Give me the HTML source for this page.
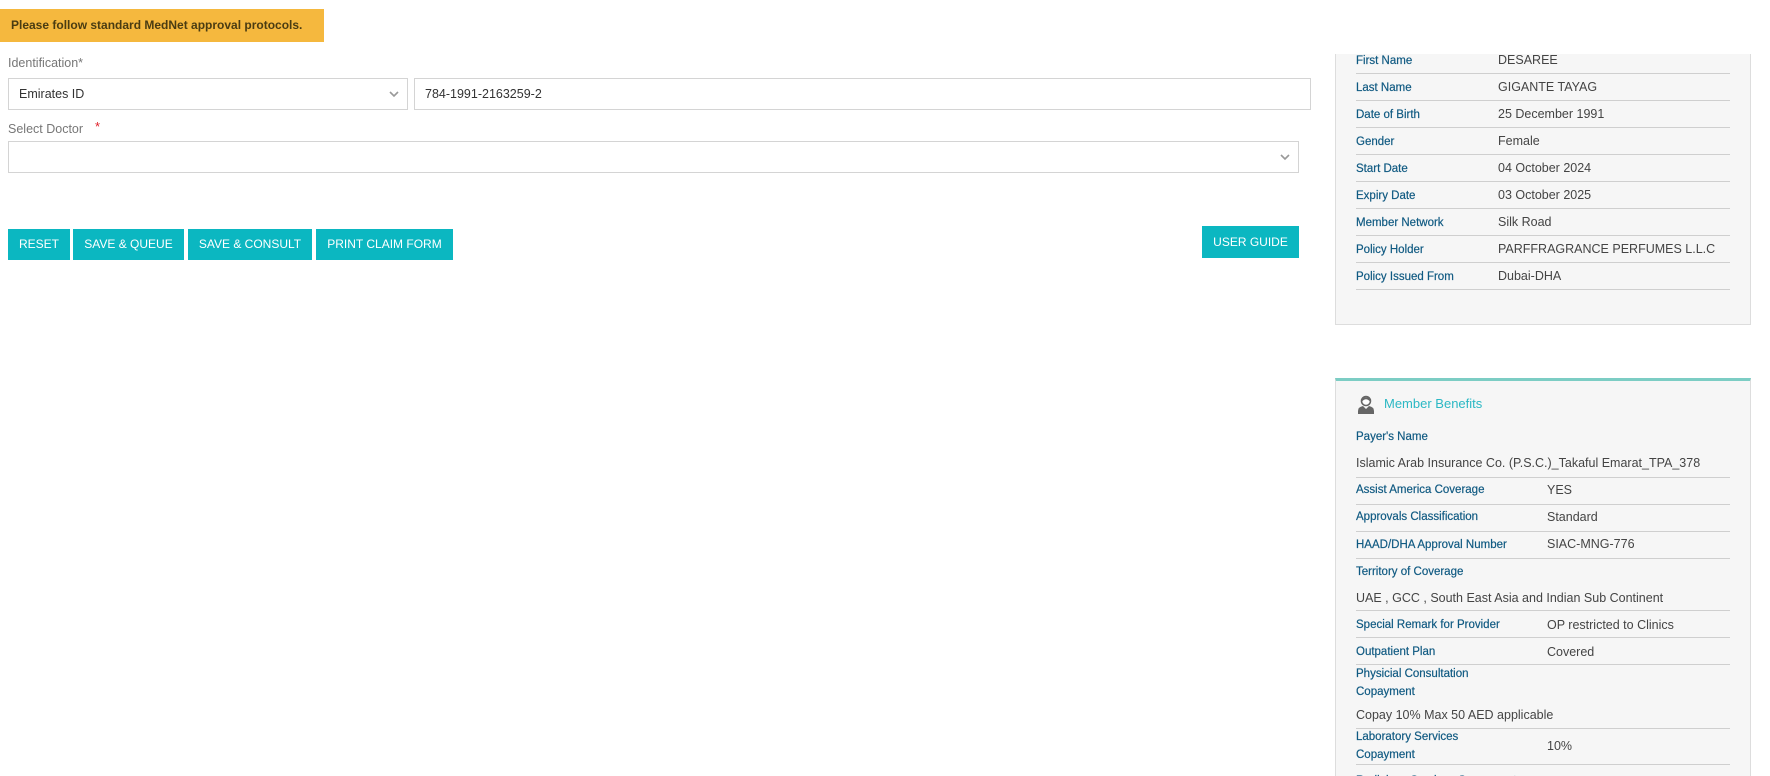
<!DOCTYPE html>
<html style="height:776px;overflow:hidden"><head><meta charset="utf-8"><style>
*{margin:0;padding:0;box-sizing:border-box}
body{width:1770px;height:776px;overflow:hidden;background:#fff;font-family:"Liberation Sans",Arial,sans-serif;position:relative}
.a{position:absolute}
.banner{left:0;top:9px;width:324px;height:33px;background:#f5b83e;color:#4a3c12;font-weight:bold;font-size:12px;line-height:33px;padding-left:11px}
.lbl{color:#777;font-size:12.5px}
.box{border:1px solid #d4d4d4;background:#fff;font-size:12.5px;color:#333;line-height:30px;padding-left:10px}
.chev{position:absolute;right:8px;top:11px}
.btn{background:#0bb7c1;color:#fff;font-size:12px;text-align:center;line-height:31px;height:31px;top:229px}
.panel{background:#f6f6f6;border:1px solid #ddd;left:1335px;width:416px}
.k{position:absolute;left:1356px;font-size:11.5px;color:#105a82;transform:translateY(-50%);white-space:nowrap;-webkit-text-stroke:0.2px #105a82}
.v{position:absolute;font-size:12.5px;color:#444;transform:translateY(-50%);white-space:nowrap}
.ln{position:absolute;left:1356px;width:374px;height:1px;background:#cfcfcf}
</style></head><body>
<div class="a banner">Please follow standard MedNet approval protocols.</div>
<div class="a lbl" style="left:8px;top:56px">Identification*</div>
<div class="a box" style="left:8px;top:78px;width:400px;height:32px">Emirates ID<svg class="chev" width="10" height="8" viewBox="0 0 10 8"><path d="M1 2l4 4 4-4" stroke="#999" stroke-width="1.6" fill="none"/></svg></div>
<div class="a box" style="left:414px;top:78px;width:897px;height:32px">784-1991-2163259-2</div>
<div class="a lbl" style="left:8px;top:122px">Select Doctor</div>
<div class="a" style="left:95px;top:119px;color:#e0202a;font-size:13px">*</div>
<div class="a box" style="left:8px;top:141px;width:1291px;height:32px"><svg class="chev" width="10" height="8" viewBox="0 0 10 8"><path d="M1 2l4 4 4-4" stroke="#999" stroke-width="1.6" fill="none"/></svg></div>
<div class="a btn" style="left:8px;width:62px">RESET</div>
<div class="a btn" style="left:73px;width:111px">SAVE &amp; QUEUE</div>
<div class="a btn" style="left:188px;width:124px">SAVE &amp; CONSULT</div>
<div class="a btn" style="left:316px;width:137px">PRINT CLAIM FORM</div>
<div class="a btn" style="left:1202px;width:97px;top:226px;height:32px;line-height:32px">USER GUIDE</div>

<div class="a panel" style="top:54px;height:271px;border-top:none"></div>
<div class="k" style="top:61px">First Name</div><div class="v" style="left:1498px;top:60px">DESAREE</div><div class="ln" style="top:73px"></div>
<div class="k" style="top:88px">Last Name</div><div class="v" style="left:1498px;top:87px">GIGANTE TAYAG</div><div class="ln" style="top:100px"></div>
<div class="k" style="top:115px">Date of Birth</div><div class="v" style="left:1498px;top:114px">25 December 1991</div><div class="ln" style="top:127px"></div>
<div class="k" style="top:142px">Gender</div><div class="v" style="left:1498px;top:141px">Female</div><div class="ln" style="top:154px"></div>
<div class="k" style="top:169px">Start Date</div><div class="v" style="left:1498px;top:168px">04 October 2024</div><div class="ln" style="top:181px"></div>
<div class="k" style="top:196px">Expiry Date</div><div class="v" style="left:1498px;top:195px">03 October 2025</div><div class="ln" style="top:208px"></div>
<div class="k" style="top:223px">Member Network</div><div class="v" style="left:1498px;top:222px">Silk Road</div><div class="ln" style="top:235px"></div>
<div class="k" style="top:250px">Policy Holder</div><div class="v" style="left:1498px;top:249px">PARFFRAGRANCE PERFUMES L.L.C</div><div class="ln" style="top:262px"></div>
<div class="k" style="top:277px">Policy Issued From</div><div class="v" style="left:1498px;top:276px">Dubai-DHA</div><div class="ln" style="top:289px"></div>

<div class="a panel" style="top:378px;height:398px;border-top:3px solid #7ccdc4;border-bottom:none"></div>
<svg class="a" style="left:1357px;top:395px" width="18" height="19" viewBox="0 0 18 19"><circle cx="9" cy="6" r="4.5" fill="#fff" stroke="#666" stroke-width="1.6"/><path d="M4.5 5.5Q9 1 13.5 5.5" stroke="#666" stroke-width="2" fill="none"/><path d="M1 19v-3q0-4 5-5l3 3 3-3q5 1 5 5v3z" fill="#666"/></svg>
<div class="a" style="left:1384px;top:396px;font-size:13px;color:#2bb8c4">Member Benefits</div>
<div class="k" style="top:437px">Payer's Name</div>
<div class="v" style="left:1356px;top:463px">Islamic Arab Insurance Co. (P.S.C.)_Takaful Emarat_TPA_378</div><div class="ln" style="top:477px"></div>
<div class="k" style="top:490px">Assist America Coverage</div><div class="v" style="left:1547px;top:490px">YES</div><div class="ln" style="top:504px"></div>
<div class="k" style="top:517px">Approvals Classification</div><div class="v" style="left:1547px;top:517px">Standard</div><div class="ln" style="top:531px"></div>
<div class="k" style="top:545px">HAAD/DHA Approval Number</div><div class="v" style="left:1547px;top:544px">SIAC-MNG-776</div><div class="ln" style="top:558px"></div>
<div class="k" style="top:572px">Territory of Coverage</div>
<div class="v" style="left:1356px;top:598px">UAE , GCC , South East Asia and Indian Sub Continent</div><div class="ln" style="top:610px"></div>
<div class="k" style="top:625px">Special Remark for Provider</div><div class="v" style="left:1547px;top:625px">OP restricted to Clinics</div><div class="ln" style="top:637px"></div>
<div class="k" style="top:652px">Outpatient Plan</div><div class="v" style="left:1547px;top:652px">Covered</div><div class="ln" style="top:664px"></div>
<div class="k" style="top:674px">Physicial Consultation</div>
<div class="k" style="top:692px">Copayment</div>
<div class="v" style="left:1356px;top:715px">Copay 10% Max 50 AED applicable</div><div class="ln" style="top:728px"></div>
<div class="k" style="top:737px">Laboratory Services</div>
<div class="k" style="top:755px">Copayment</div><div class="v" style="left:1547px;top:746px">10%</div><div class="ln" style="top:764px"></div>
<div class="k" style="top:781px">Radiology Services Copayment</div><div class="v" style="left:1547px;top:781px">10%</div>
</body></html>
